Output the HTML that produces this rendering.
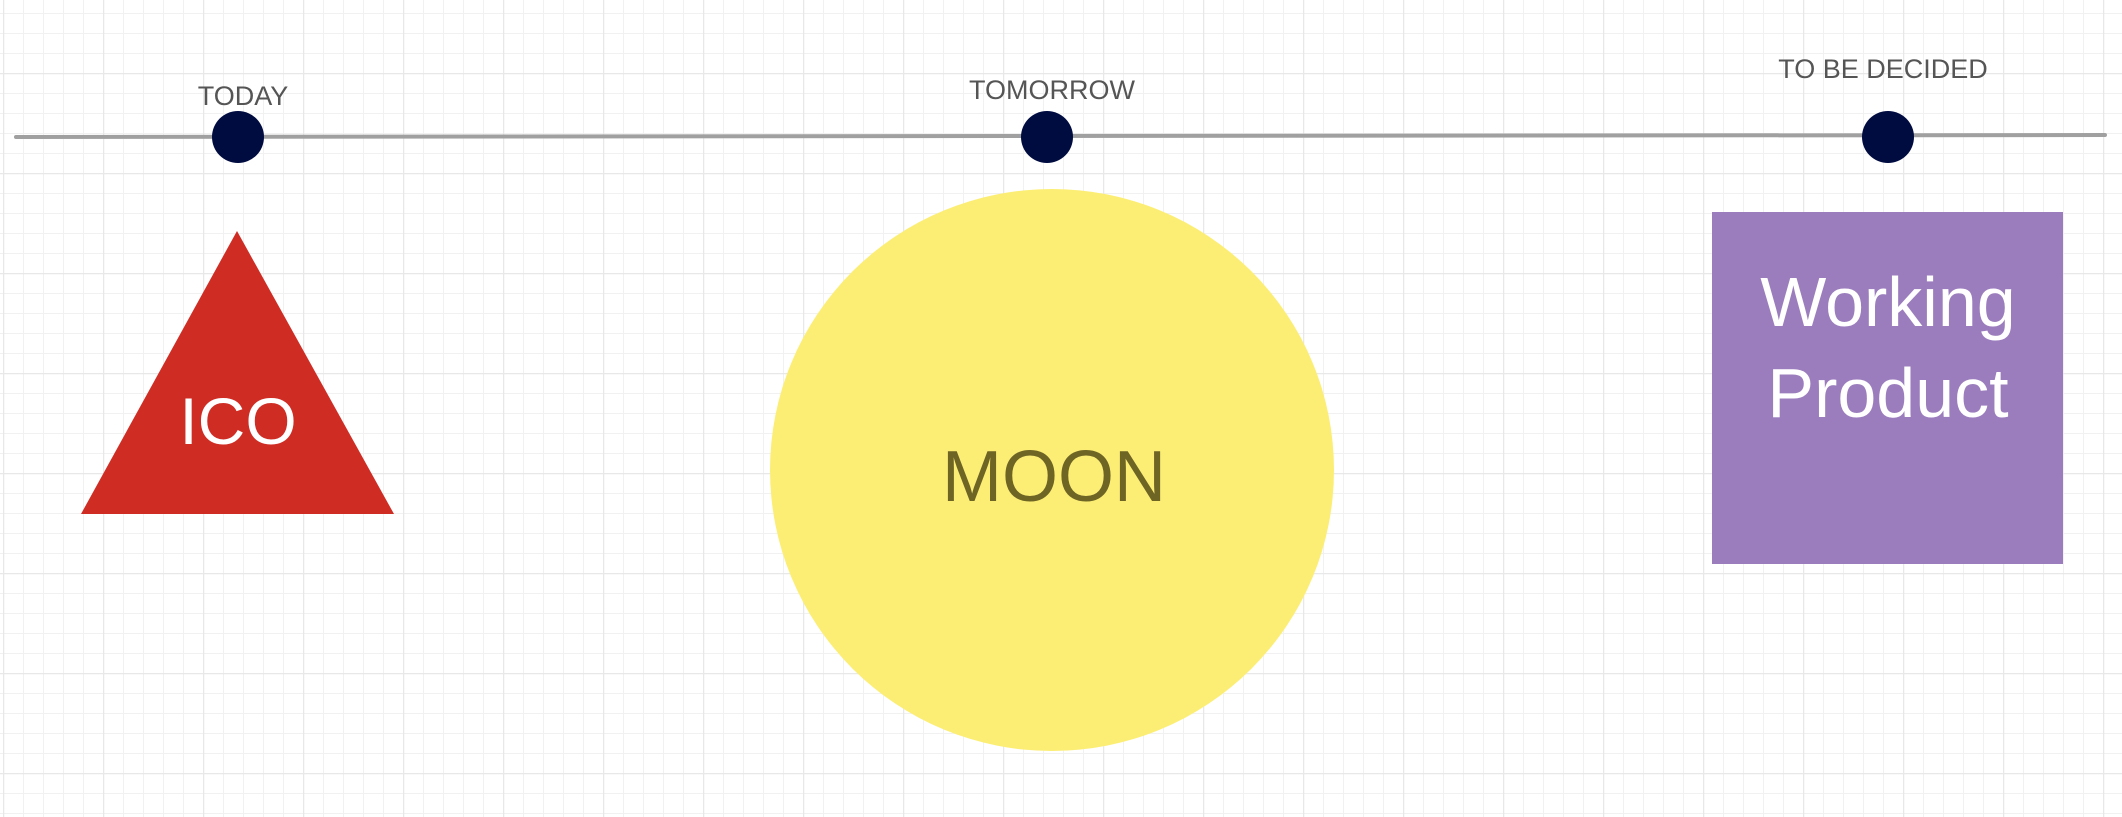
<!DOCTYPE html>
<html><head><meta charset="utf-8"><style>
html,body{margin:0;padding:0;background:#fff;}
svg{display:block}
text{font-family:"Liberation Sans",sans-serif;}
</style></head><body>
<svg width="2122" height="817" viewBox="0 0 2122 817" xmlns="http://www.w3.org/2000/svg">
<defs>
<pattern id="g" x="3" y="13" width="20" height="20" patternUnits="userSpaceOnUse">
<path d="M0.5 0V20M0 0.5H20" stroke="#f1f1f1" stroke-width="1" fill="none"/>
</pattern>
<pattern id="G" x="3" y="-27" width="100" height="100" patternUnits="userSpaceOnUse">
<path d="M0.5 0V100M0 0.5H100" stroke="#e8e8e8" stroke-width="1.5" fill="none"/>
</pattern>
</defs>
<rect width="2122" height="817" fill="#fff"/>
<rect width="2122" height="817" fill="url(#g)"/>
<rect width="2122" height="817" fill="url(#G)"/>
<line x1="16" y1="137" x2="2105" y2="135" stroke="#a0a0a0" stroke-width="4" stroke-linecap="round"/>
<circle cx="238" cy="137" r="26" fill="#000b40"/>
<circle cx="1047" cy="137" r="26" fill="#000b40"/>
<circle cx="1888" cy="137" r="26" fill="#000b40"/>
<text x="243" y="105" font-size="27" fill="#555" text-anchor="middle">TODAY</text>
<text x="1052" y="99" font-size="27" fill="#555" text-anchor="middle">TOMORROW</text>
<text x="1883" y="78" font-size="27" fill="#555" text-anchor="middle">TO BE DECIDED</text>
<polygon points="237,231 394,514 81,514" fill="#cf2c24"/>
<text x="238" y="444" font-size="66" fill="#fff" text-anchor="middle">ICO</text>
<ellipse cx="1052" cy="470" rx="282" ry="281" fill="#fcee74"/>
<text x="1054" y="501" font-size="72" fill="#6e6424" text-anchor="middle">MOON</text>
<rect x="1712" y="212" width="351" height="352" fill="#9b7dbd"/>
<text x="1888" y="326" font-size="70" fill="#fff" text-anchor="middle">Working</text>
<text x="1888" y="417" font-size="70" fill="#fff" text-anchor="middle">Product</text>
</svg>
</body></html>
